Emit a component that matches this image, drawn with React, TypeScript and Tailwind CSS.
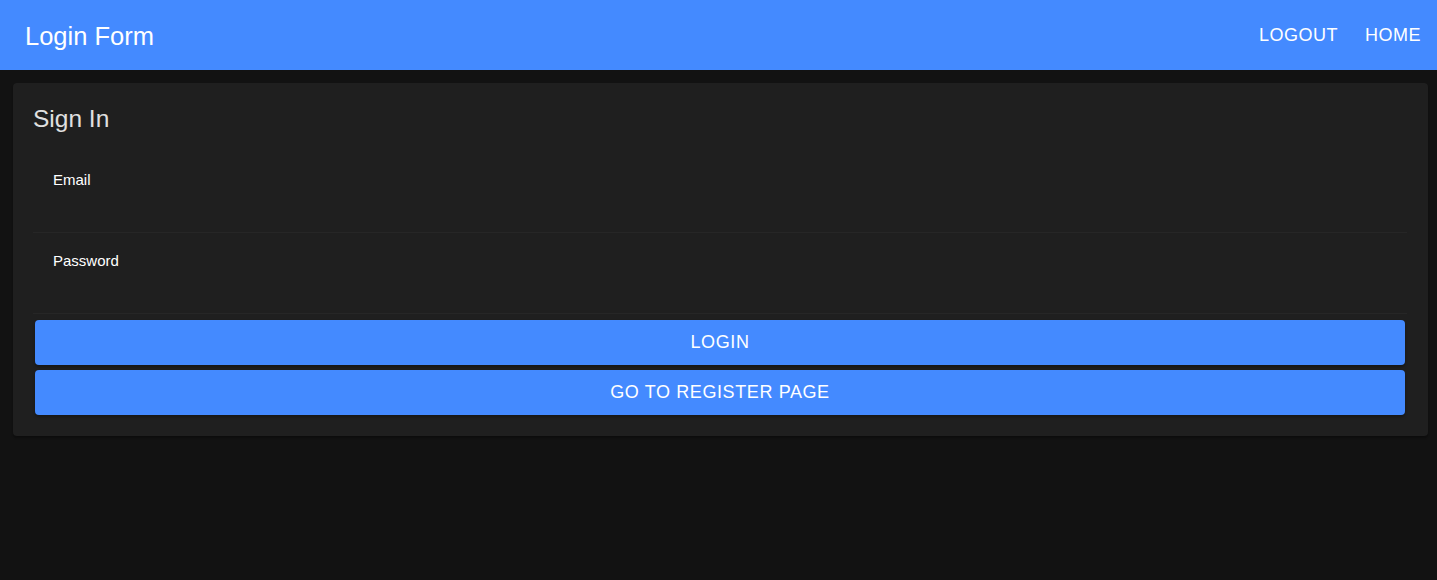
import React from 'react';

function Field({ label, type }: { label: string; type: string }) {
  return (
    <label className="flex flex-col h-[81px] border-b border-[#262626] mr-[21px] overflow-hidden">
      <span className="block pl-[20px] pt-[19px] text-[15px] leading-[18px] text-white">{label}</span>
      <input type={type} className="w-full h-[30px] bg-transparent outline-none text-white px-[20px]" />
    </label>
  );
}

export default function App() {
  return (
    <div className="min-h-[580px] w-full bg-[#121212]" style={{ fontFamily: '"Liberation Sans", Arial, sans-serif' }}>
      {/* Top bar */}
      <header className="h-[70px] bg-[#448aff] flex items-center justify-between pl-[25px] pr-[16px]">
        <h1 className="text-[25.5px] text-white leading-none pt-[4px]">Login Form</h1>
        <nav className="flex items-center gap-[27px] pt-[1px]">
          <button className="text-[18px] text-white tracking-[0.5px]">LOGOUT</button>
          <button className="text-[18px] text-white tracking-[0.5px]">HOME</button>
        </nav>
      </header>

      {/* Card */}
      <div className="ml-[13px] mt-[13px] w-[1415px] bg-[#1f1f1f] rounded-[4px] shadow-[0_2px_2px_rgba(0,0,0,0.3)] pt-[20px] pl-[20px] pb-[21px]">
        <h2 className="text-[24.5px] leading-[30px] text-[#e0e0e0] pt-[1px]">Sign In</h2>
        <div className="mt-[18px]">
          <Field label="Email" type="email" />
          <Field label="Password" type="password" />
        </div>
        <div className="flex flex-col gap-[5px] mt-[6px] ml-[2px] mr-[23px]">
          <button className="h-[45px] rounded-[4px] bg-[#448aff] text-white text-[18px] tracking-[0.6px] shadow-[0_2px_3px_rgba(0,0,0,0.3)]">
            LOGIN
          </button>
          <button className="h-[45px] rounded-[4px] bg-[#448aff] text-white text-[18px] tracking-[0.6px] shadow-[0_2px_3px_rgba(0,0,0,0.3)]">
            GO TO REGISTER PAGE
          </button>
        </div>
      </div>
    </div>
  );
}
